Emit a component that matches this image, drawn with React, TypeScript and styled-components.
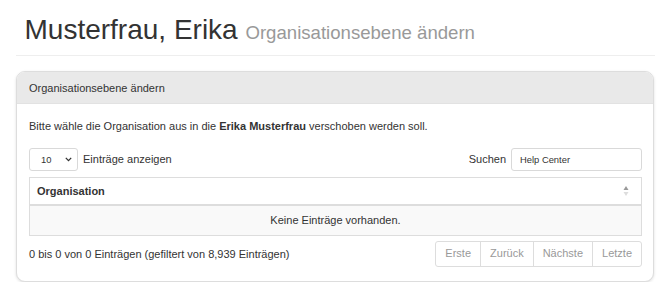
import React from "react";
import styled, { createGlobalStyle } from "styled-components";

const Global = createGlobalStyle`
  html, body { margin: 0; padding: 0; background: #fff; }
  body {
    font-family: "Liberation Sans", Arial, Helvetica, sans-serif;
    font-size: 11px;
    color: #333;
  }
  * { box-sizing: border-box; }
`;

const Page = styled.div`
  width: 670px;
  padding: 0 15px 0 16px;
`;

const PageHeader = styled.div`
  border-bottom: 1px solid #eee;
  padding: 0 0 6px 8.5px;
`;

const Title = styled.h1`
  margin: 15px 0 0;
  font-size: 28px;
  line-height: 30.8px;
  font-weight: 400;
  color: #333;
`;

const Sub = styled.small`
  font-size: 18.6px;
  color: #999;
  font-weight: 400;
`;

const Panel = styled.section`
  margin-top: 15px;
  margin-right: 1px;
  border: 1px solid #ddd;
  border-radius: 9px;
  background: #fff;
  box-shadow: 0 1px 3px rgba(0, 0, 0, 0.13);
  overflow: hidden;
`;

const PanelHeading = styled.div`
  background: #e9e9e9;
  border-bottom: 1px solid #e2e2e2;
  padding: 8px 12px 7px;
  line-height: 16px;
`;

const PanelBody = styled.div`
  padding: 14px 11px 14px 12px;
`;

const Intro = styled.p`
  margin: 0 0 14px;
  line-height: 16px;
`;

const Controls = styled.div`
  display: flex;
  justify-content: space-between;
  align-items: center;
  height: 23px;
  margin-bottom: 6px;
`;

const Group = styled.label`
  display: flex;
  align-items: center;
  gap: 5px;
`;

const SelectBox = styled.div`
  width: 49px;
  height: 22.5px;
  border: 1px solid #d9d9d9;
  border-radius: 3px;
  display: flex;
  align-items: center;
  justify-content: space-between;
  padding: 0 5px 0 11px;
  font-size: 9.4px;
  color: #333;
  background: #fff;
`;

const SearchInput = styled.div`
  width: 131px;
  height: 23px;
  border: 1px solid #d9d9d9;
  border-radius: 3px;
  display: flex;
  align-items: center;
  padding: 0 8px;
  font-size: 9.4px;
  color: #333;
  background: #fff;
`;

const Table = styled.div`
  border: 1px solid #ddd;
`;

const HeadRow = styled.div`
  height: 28px;
  border-bottom: 2px solid #ddd;
  display: flex;
  align-items: center;
  justify-content: space-between;
  padding: 0 12px 0 7px;
  font-weight: 700;
`;

const EmptyRow = styled.div`
  height: 29px;
  background: #f9f9f9;
  display: flex;
  align-items: center;
  justify-content: center;
`;

const Footer = styled.div`
  margin-top: 5px;
  display: flex;
  justify-content: space-between;
  align-items: center;
  height: 26px;
`;

const Pager = styled.div`
  display: flex;
  border: 1px solid #ddd;
  border-radius: 3px;
  height: 26px;
`;

const PageBtn = styled.span<{ $first?: boolean }>`
  display: flex;
  align-items: center;
  padding: 0 9px;
  color: #999;
  border-left: ${(p) => (p.$first ? "none" : "1px solid #ddd")};
  line-height: 1;
`;

const Chevron = () => (
  <svg width="7" height="5" viewBox="0 0 7 5">
    <path d="M0.8 0.9 L3.5 3.6 L6.2 0.9" fill="none" stroke="#333" strokeWidth="1.3" />
  </svg>
);

const SortIcon = () => (
  <svg width="6" height="12" viewBox="0 0 6 12">
    <path d="M3 1 L5.5 5 L0.5 5 Z" fill="#999" />
    <path d="M3 11 L5.5 7 L0.5 7 Z" fill="#ddd" />
  </svg>
);

export default function App() {
  return (
    <Page>
      <Global />
      <PageHeader>
        <Title>
          Musterfrau, Erika <Sub>Organisationsebene ändern</Sub>
        </Title>
      </PageHeader>
      <Panel>
        <PanelHeading>Organisationsebene ändern</PanelHeading>
        <PanelBody>
          <Intro>
            Bitte wähle die Organisation aus in die <b>Erika Musterfrau</b> verschoben werden soll.
          </Intro>
          <Controls>
            <Group>
              <SelectBox>
                10
                <Chevron />
              </SelectBox>
              Einträge anzeigen
            </Group>
            <Group>
              Suchen
              <SearchInput>Help Center</SearchInput>
            </Group>
          </Controls>
          <Table>
            <HeadRow>
              Organisation
              <SortIcon />
            </HeadRow>
            <EmptyRow>Keine Einträge vorhanden.</EmptyRow>
          </Table>
          <Footer>
            <span>0 bis 0 von 0 Einträgen (gefiltert von 8,939 Einträgen)</span>
            <Pager>
              <PageBtn $first>Erste</PageBtn>
              <PageBtn>Zurück</PageBtn>
              <PageBtn>Nächste</PageBtn>
              <PageBtn>Letzte</PageBtn>
            </Pager>
          </Footer>
        </PanelBody>
      </Panel>
    </Page>
  );
}
